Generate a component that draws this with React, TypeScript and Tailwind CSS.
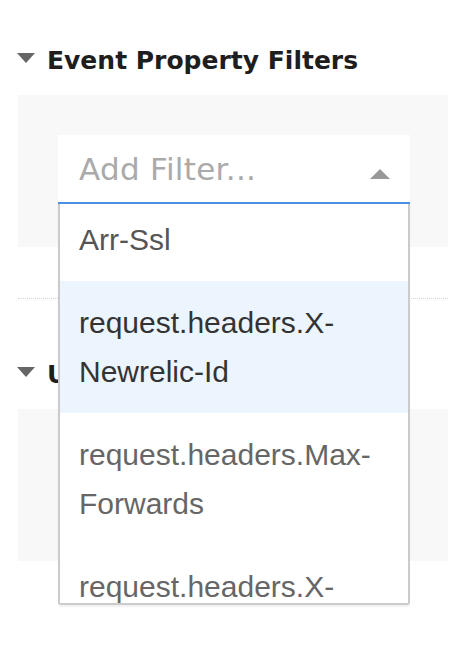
import React from "react";

const Caret = () => (
  <svg width="18" height="10" viewBox="0 0 18 10" className="mb-[6px] shrink-0">
    <path d="M0 0 H18 L9 10 Z" fill="#666" />
  </svg>
);

const UpArrow = () => (
  <svg width="20" height="10" viewBox="0 0 20 10" className="mt-[11px] shrink-0">
    <path d="M0 10 L10 0 L20 10 Z" fill="#999" />
  </svg>
);

const options = [
  { label: "Arr-Ssl", cls: "text-[#555]", active: false },
  { label: "request.headers.X-Newrelic-Id", cls: "text-[#333]", active: true },
  { label: "request.headers.Max-Forwards", cls: "text-[#666]", active: false },
  { label: "request.headers.X-Forwarded-For", cls: "text-[#666]", active: false },
];

export default function App() {
  return (
    <div className="relative w-[466px] h-[658px] bg-white overflow-hidden">
      {/* Section 1 */}
      <div className="flex items-center h-[42px] mt-[40px] pl-[17px] gap-[12px]">
        <Caret />
        <span className="font-['DejaVu_Sans',sans-serif] font-bold text-[25px] leading-[42px] text-[#1e1e1e]">
          Event Property Filters
        </span>
      </div>
      <div className="mx-[18px] mt-[13px] h-[152px] bg-[#f8f8f8] pt-[40px] px-[40px]">
        <div className="relative w-[352px]">
          <div className="relative z-20 h-[69px] bg-white border-b-2 border-[#4a90e2] flex items-center justify-between pl-[21px] pr-[20px]">
            <span className="font-['DejaVu_Sans',sans-serif] text-[31px] tracking-[0.3px] leading-[40px] text-[#aaa]">
              Add Filter...
            </span>
            <UpArrow />
          </div>
          <div className="absolute z-10 left-0 top-[63px] w-[352px] h-[407px] bg-white border-2 border-t-0 border-[#cbcbcb] rounded-b-[3px] overflow-hidden shadow-[0_2px_2px_rgba(0,0,0,0.06)]">
            {options.map((o) => (
              <div
                key={o.label}
                className={`pl-[19px] pr-[12px] py-[17px] font-['Liberation_Sans',Arial,sans-serif] text-[30px] leading-[49px] ${o.cls} ${o.active ? "bg-[#ecf4fd]" : "bg-white"}`}
              >
                {o.label}
              </div>
            ))}
          </div>
        </div>
      </div>
      <div className="mx-[18px] mt-[51px] border-t border-dotted border-[#d5d5d5]" />

      {/* Section 2 */}
      <div className="flex items-center h-[42px] mt-[55px] pl-[17px] gap-[12px]">
        <Caret />
        <span className="font-['DejaVu_Sans',sans-serif] font-bold text-[25px] leading-[42px] text-[#1e1e1e]">
          User Property Filters
        </span>
      </div>
      <div className="mx-[18px] mt-[13px] h-[152px] bg-[#f8f8f8]" />
    </div>
  );
}
